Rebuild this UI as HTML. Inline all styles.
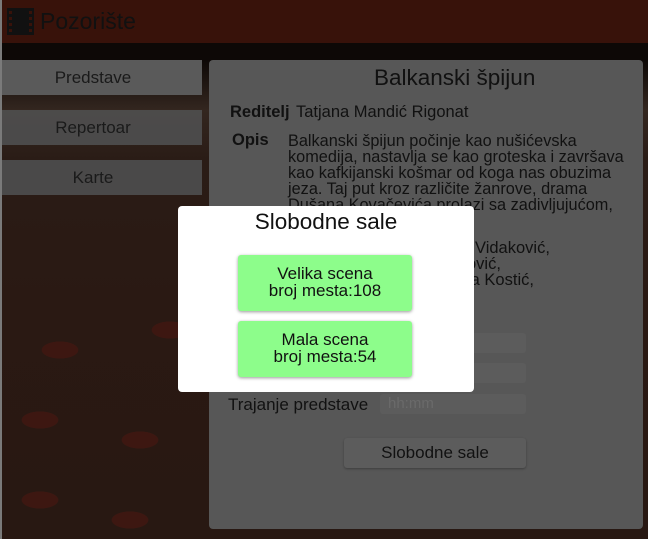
<!DOCTYPE html>
<html><head><meta charset="utf-8"><style>
*{margin:0;padding:0;box-sizing:border-box}
body{width:648px;height:539px;overflow:hidden;position:relative;font-family:"Liberation Sans",sans-serif;color:#111;
background:linear-gradient(180deg,#0d0806 0px,#0d0806 60px,#33261f 110px,#2a1c16 160px,#2a1913 300px,#281812 100%);}
.lb{position:absolute;left:0;top:0;width:2px;height:539px;background:#7a7a7a;z-index:5}
.bgdeco{position:absolute;inset:200px 0 0 0;background:
radial-gradient(ellipse 30px 14px at 60px 150px,#3d1711 60%,transparent 62%),
radial-gradient(ellipse 30px 14px at 170px 130px,#3d1711 60%,transparent 62%),
radial-gradient(ellipse 30px 14px at 40px 220px,#3d1711 60%,transparent 62%),
radial-gradient(ellipse 30px 14px at 140px 240px,#3d1711 60%,transparent 62%),
radial-gradient(ellipse 30px 14px at 130px 320px,#3d1711 60%,transparent 62%),
radial-gradient(ellipse 30px 14px at 40px 300px,#3d1711 60%,transparent 62%);}
.hdr{position:absolute;left:0;top:0;width:648px;height:43px;background:#38120a}
.hdr span{position:absolute;left:40px;top:8px;font-size:23px;color:#111}
.hdr svg{position:absolute;left:7px;top:8px}
.nav{position:absolute;left:0;width:202px;height:35px;font-size:17px;color:#1a1a1a;text-align:center;padding-right:16px;line-height:35px}
.panel{position:absolute;left:209px;top:60px;width:434px;height:469px;background:#575757;border-radius:4px}
.t{position:absolute;font-size:16.5px;white-space:nowrap}
.inp{position:absolute;left:171px;width:146px;height:20px;background:#5c5c5c;border-radius:3px;font-size:15px;color:#6a6a6a;padding-left:8px;line-height:20px}
.modal{position:absolute;left:178px;top:206px;width:296px;height:186px;background:#fff;border-radius:4px}
.gb{position:absolute;left:60px;width:174px;height:56px;background:#8dfd8b;border-radius:3px;box-shadow:0 1px 3px rgba(0,0,0,.4);text-align:center;font-size:17px;line-height:17px;padding-top:10px;color:#111}
</style></head><body>
<div class="lb"></div>
<div class="bgdeco"></div>
<div class="hdr"><svg width="27" height="27" viewBox="0 0 27 27"><rect x="0" y="0" width="27" height="27" fill="#111"/><g fill="#38120a"><rect x="2" y="3" width="3" height="3"/><rect x="2" y="9" width="3" height="3"/><rect x="2" y="15" width="3" height="3"/><rect x="2" y="21" width="3" height="3"/><rect x="22" y="3" width="3" height="3"/><rect x="22" y="9" width="3" height="3"/><rect x="22" y="15" width="3" height="3"/><rect x="22" y="21" width="3" height="3"/></g></svg><span>Pozorište</span></div>
<div class="nav" style="top:60px;background:#5a5a5a">Predstave</div>
<div class="nav" style="top:110px;background:rgba(78,78,78,.92)">Repertoar</div>
<div class="nav" style="top:160px;background:rgba(76,76,76,.95)">Karte</div>
<div class="panel">
<div class="t" style="left:165px;top:5px;font-size:22.5px">Balkanski špijun</div>
<div class="t" style="left:21px;top:43px;font-weight:bold">Reditelj</div>
<div class="t" style="left:87px;top:43px">Tatjana Mandić Rigonat</div>
<div class="t" style="left:23px;top:71px;font-weight:bold">Opis</div>
<div class="t" style="left:79px;top:73px;line-height:16px;font-size:16.3px">Balkanski špijun počinje kao nušićevska<br>komedija, nastavlja se kao groteska i završava<br>kao kafkijanski košmar od koga nas obuzima<br>jeza. Taj put kroz različite žanrove, drama<br>Dušana Kovačevića prolazi sa zadivljujućom,</div>
<div class="t" style="left:266px;top:179px">Vidaković,</div>
<div class="t" style="left:258px;top:195px">ović,</div>
<div class="t" style="left:258px;top:211px">ja Kostić,</div>
<div class="inp" style="top:273px">dd.mm.yyyy</div>
<div class="inp" style="top:303px"></div>
<div class="t" style="left:19px;top:335px;font-size:17px">Trajanje predstave</div>
<div class="inp" style="top:334px">hh:mm</div>
<div style="position:absolute;left:135px;top:378px;width:182px;height:30px;background:#5c5c5c;border-radius:3px;box-shadow:0 1px 2px rgba(0,0,0,.3);text-align:center;line-height:30px;font-size:17px">Slobodne sale</div>
</div>
<div class="modal">
<div class="t" style="left:0;width:296px;text-align:center;top:3px;font-size:22.5px">Slobodne sale</div>
<div class="gb" style="top:49px">Velika scena<br>broj mesta:108</div>
<div class="gb" style="top:115px">Mala scena<br>broj mesta:54</div>
</div>
</body></html>
